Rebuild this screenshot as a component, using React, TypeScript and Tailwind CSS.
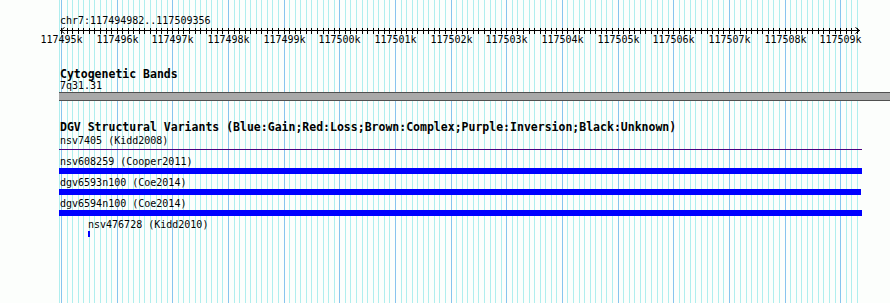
const START = 117494982;
const END = 117509356;
const X0 = 60;
const W = 800;

const toX = (bp: number) => X0 + ((bp - START) * W) / (END - START);

const ticks: { bp: number; x: number; major: boolean }[] = [];
for (let bp = 117495000; bp <= END; bp += 100) {
	ticks.push({ bp, x: Math.round(toX(bp)) + 0.5, major: bp % 1000 === 0 });
}

function Grid() {
	return (
		<svg className="absolute inset-0" width={890} height={303}>
			<line x1={59.5} x2={59.5} y1={0} y2={303} stroke="#afeeee" />
			{ticks.map((t) => (
				<line
					key={t.bp}
					x1={t.x}
					x2={t.x}
					y1={0}
					y2={303}
					stroke={t.major ? "#87c4ee" : "#afeeee"}
				/>
			))}
		</svg>
	);
}

function Ruler() {
	return (
		<div className="relative h-[19px]">
			<svg className="absolute left-0 top-0" width={890} height={8}>
				<line x1={60} x2={860} y1={3.5} y2={3.5} stroke="#000" />
				{ticks.map((t) => (
					<line key={t.bp} x1={t.x} x2={t.x} y1={1} y2={7} stroke="#000" />
				))}
				<path d="M64.5 0.5 L60.5 3.5 L64.5 6.5" fill="none" stroke="#000" />
				<path d="M855.5 0.5 L859.5 3.5 L855.5 6.5" fill="none" stroke="#000" />
			</svg>
			{ticks
				.filter((t) => t.major)
				.map((t) => (
					<span
						key={t.bp}
						className="absolute top-[7px] -translate-x-1/2 whitespace-nowrap"
						style={{ left: t.x }}
					>
						{t.bp / 1000}k
					</span>
				))}
		</div>
	);
}

function TrackLabel({ children }: { children: React.ReactNode }) {
	return (
		<div className="pl-[60px] text-[11.5px] leading-[12px] font-bold whitespace-nowrap">
			{children}
		</div>
	);
}

function Feature({ name, bar = 803 }: { name: string; bar?: number }) {
	return (
		<div>
			<div className="pl-[60px] h-[12px] whitespace-nowrap">{name}</div>
			<div className="ml-[59px] h-[6px] bg-[#0000ff]" style={{ width: bar }} />
		</div>
	);
}

export default function App() {
	return (
		<div className="relative w-[890px] h-[303px] overflow-hidden bg-[#fcfefc] text-black font-['DejaVu_Sans_Mono',monospace] text-[10px] leading-[12px]">
			<Grid />
			<div className="relative pt-[15px]">
				<div className="pl-[60px] h-[12px]">chr7:117494982..117509356</div>
				<Ruler />

				<div className="mt-[22px]">
					<TrackLabel>Cytogenetic Bands</TrackLabel>
					<div className="pl-[60px] h-[12px]">7q31.31</div>
					<div className="ml-[59px] h-[9px] border-y border-[#505050] bg-[#a9a9a9]" />
				</div>

				<div className="mt-[20px]">
					<TrackLabel>
						DGV Structural Variants
						(Blue:Gain;Red:Loss;Brown:Complex;Purple:Inversion;Black:Unknown)
					</TrackLabel>
					<div className="mt-[2px] pl-[60px] h-[12px]">nsv7405 (Kidd2008)</div>
					<div className="mt-[2px] ml-[59px] w-[803px] h-[1px] bg-[#4b0082]" />
					<div className="mt-[6px] flex flex-col gap-[3px]">
						<Feature name="nsv608259 (Cooper2011)" />
						<Feature name="dgv6593n100 (Coe2014)" bar={802} />
						<Feature name="dgv6594n100 (Coe2014)" />
						<div>
							<div className="pl-[88px] h-[12px]">nsv476728 (Kidd2010)</div>
							<div className="ml-[88px] w-[2px] h-[6px] bg-[#0000ff]" />
						</div>
					</div>
				</div>
			</div>
		</div>
	);
}
